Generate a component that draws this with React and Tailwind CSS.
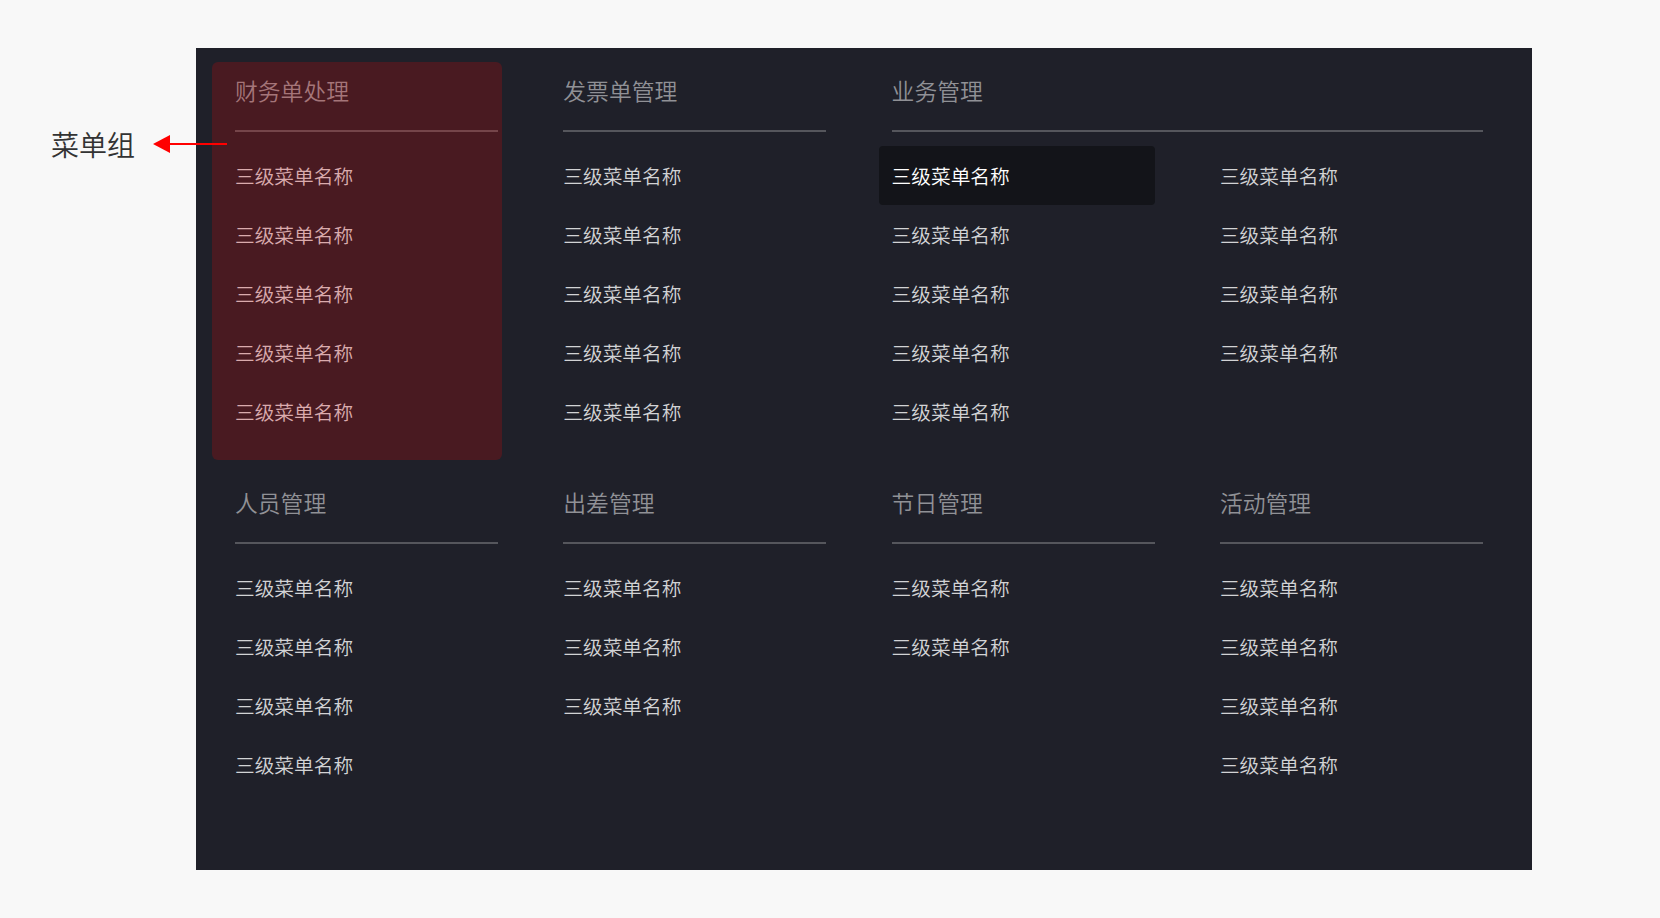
import React from 'react';

const ITEM = '三级菜单名称';

const groupsTop = [
    { title: '财务单处理', cols: [5], marked: true },
    { title: '发票单管理', cols: [5] },
    { title: '业务管理', cols: [5, 4], span: true, active: [0, 0] },
];

const groupsBottom = [
    { title: '人员管理', cols: [4] },
    { title: '出差管理', cols: [3] },
    { title: '节日管理', cols: [2] },
    { title: '活动管理', cols: [4] },
];

function MenuItem({ active }) {
    if (active) {
        return (
            <div className="-ml-[13px] flex h-[59px] items-center rounded bg-[#131419] pl-[13px] text-[19.7px] font-[350] text-white">
                {ITEM}
            </div>
        );
    }
    return (
        <div className="flex h-[59px] items-center text-[19.7px] font-[350] text-[#d2d3d5]">
            {ITEM}
        </div>
    );
}

function MenuGroup({ group }) {
    return (
        <div className={group.span ? 'relative col-span-2' : 'relative'}>
            <div className="border-b-2 border-[#55565c] pb-[24px] text-[22.8px] font-[350] leading-[31px] text-[#909196]">
                {group.title}
            </div>
            <div className={group.span ? 'mt-[14px] grid grid-cols-[263px_263px] gap-x-[65.3px]' : 'mt-[14px]'}>
                {group.cols.map((count, c) => (
                    <div key={c}>
                        {Array.from({ length: count }).map((_, i) => (
                            <MenuItem
                                key={i}
                                active={group.active && group.active[0] === c && group.active[1] === i}
                            />
                        ))}
                    </div>
                ))}
            </div>
            {/* annotation highlight over the group */}
            {group.marked && (
                <div className="pointer-events-none absolute -top-[13px] -bottom-[19px] -left-[23px] -right-[4px] rounded-md bg-[rgba(255,0,0,0.19)]"></div>
            )}
        </div>
    );
}

export default function App() {
    return (
        <div
            className="relative min-h-[918px] bg-[#f8f8f8] pl-[196px] pt-[48px]"
            style={{ fontFamily: '"Noto Sans CJK SC", "Noto Sans", sans-serif' }}
        >
            {/* Annotation */}
            <div className="absolute left-[51px] top-[124px] text-[28px] font-[350] leading-[40px] text-[#333333]">
                菜单组
            </div>
            <svg className="absolute left-[152px] top-[134px] z-10" width="76" height="20" viewBox="0 0 76 20">
                <line x1="16" y1="10" x2="75" y2="10" stroke="#ff0000" strokeWidth="2" />
                <polygon points="1,10 18,1 18,19" fill="#ff0000" />
            </svg>

            {/* Panel */}
            <div className="h-[822px] w-[1336px] bg-[#1f2029] pl-[39px] pt-[27px]">
                <div className="grid grid-cols-[263px_263px_263px_263px] gap-x-[65.3px]">
                    {groupsTop.map((g) => (
                        <MenuGroup key={g.title} group={g} />
                    ))}
                </div>
                <div className="mt-[46px] grid grid-cols-[263px_263px_263px_263px] gap-x-[65.3px]">
                    {groupsBottom.map((g) => (
                        <MenuGroup key={g.title} group={g} />
                    ))}
                </div>
            </div>
        </div>
    );
}
